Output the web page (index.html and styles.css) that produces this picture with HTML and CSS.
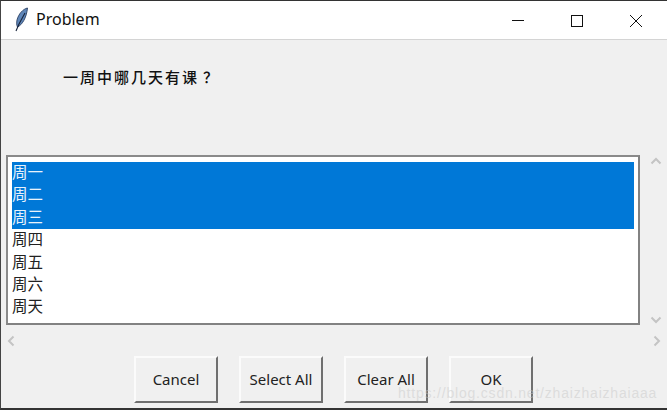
FILE: index.html
```html
<!DOCTYPE html>
<html lang="zh-CN">

<head>
    <meta charset="UTF-8">
    <meta name="viewport" content="width=device-width, initial-scale=1.0">
    <title>Problem</title>
    <link rel="stylesheet" href="styles.css">
</head>

<body>
    <div class="window">
        <div class="titlebar">
            <svg class="app-icon" width="16" height="26" viewBox="0 0 16 26">
                <path d="M13.500 1C9 2 4.500 7 3 13C2.500 16 2.500 18 3.500 20C8 18 12.500 11 13.500 1Z" fill="#5f86b8" stroke="#2a3f63" stroke-width="0.900"/>
                <path d="M11 6L5 17L2 24" fill="none" stroke="#16233a" stroke-width="1.100"/>
            </svg>
            <span class="title">Problem</span>
            <div class="window-controls">
                <svg class="ctl" width="46" height="38" viewBox="0 0 46 38"><path d="M17 19.500H29" stroke="#111" stroke-width="1"/></svg>
                <svg class="ctl" width="46" height="38" viewBox="0 0 46 38"><rect x="17.500" y="14.500" width="11" height="11" fill="none" stroke="#111" stroke-width="1"/></svg>
                <svg class="ctl" width="46" height="38" viewBox="0 0 46 38"><path d="M17 14L29 26M29 14L17 26" stroke="#111" stroke-width="1"/></svg>
            </div>
        </div>

        <div class="content">
            <div class="question">一周中哪几天有课<span class="qmark">？</span></div>

            <div class="list-area">
                <ul class="listbox">
                    <li class="selected">周一</li>
                    <li class="selected">周二</li>
                    <li class="selected">周三</li>
                    <li>周四</li>
                    <li>周五</li>
                    <li>周六</li>
                    <li>周天</li>
                </ul>
                <div class="vscroll">
                    <svg width="12" height="8" viewBox="0 0 12 8"><path d="M1.500 6.500L6 2L10.500 6.500" class="chevron"/></svg>
                    <svg width="12" height="8" viewBox="0 0 12 8"><path d="M1.500 1.500L6 6L10.500 1.500" class="chevron"/></svg>
                </div>
                <div class="hscroll">
                    <svg width="8" height="12" viewBox="0 0 8 12"><path d="M6.500 1.500L2 6L6.500 10.500" class="chevron"/></svg>
                    <svg width="8" height="12" viewBox="0 0 8 12"><path d="M1.500 1.500L6 6L1.500 10.500" class="chevron"/></svg>
                </div>
            </div>

            <div class="buttons">
                <button class="btn">Cancel</button>
                <button class="btn">Select All</button>
                <button class="btn">Clear All</button>
                <button class="btn">OK</button>
            </div>
        </div>

        <div class="watermark">https://blog.csdn.net/zhaizhaizhaiaaa</div>
    </div>
</body>

</html>
```

FILE: styles.css
```css
* {
    box-sizing: border-box;
}

html,
body {
    margin: 0;
    padding: 0;
}

body {
    width: 667px;
    height: 410px;
    overflow: hidden;
    background-color: #f0f0f0;
    font-family: "Noto Sans", "Liberation Sans", "Noto Sans CJK SC", sans-serif;
}

.window {
    position: relative;
    width: 667px;
    height: 410px;
    background-color: #f0f0f0;
    border-top: 1px solid #333;
    border-left: 1px solid #444;
    border-bottom: 2px solid #333;
    display: flex;
    flex-direction: column;
}

.titlebar {
    height: 39px;
    flex: none;
    background-color: white;
    border-bottom: 1px solid #d4d4d4;
    display: flex;
    align-items: center;
    padding-left: 13px;
}

.app-icon {
    flex: none;
}

.title {
    margin-left: 6px;
    margin-bottom: 2px;
    font-size: 16px;
    color: #111;
}

.window-controls {
    margin-left: auto;
    margin-right: 8px;
    display: flex;
    gap: 13px;
}

.ctl {
    display: block;
}

.content {
    flex: 1;
    display: flex;
    flex-direction: column;
    padding-left: 5px;
}

.question {
    height: 115px;
    padding-top: 27px;
    padding-left: 57px;
    font-family: "Noto Sans CJK SC", sans-serif;
    font-size: 15px;
    line-height: 20px;
    letter-spacing: 2px;
    font-weight: 500;
    color: #111;
}

.qmark {
    margin-left: 4px;
}

.list-area {
    display: grid;
    grid-template-columns: 634px 1fr;
    grid-template-rows: 170px 31px;
}

.listbox {
    margin: 0;
    padding: 5px 4px 0 4px;
    list-style: none;
    background-color: white;
    border: 2px solid;
    border-color: #8a8a8a #828282 #828282 #8a8a8a;
    overflow: hidden;
}

.listbox li {
    height: 22.400px;
    line-height: 18px;
    font-family: "Noto Sans CJK SC", sans-serif;
    font-size: 15.500px;
    color: #222;
}

.listbox li.selected {
    background-color: #0078d7;
    color: #e8f2fb;
}

.vscroll {
    display: flex;
    flex-direction: column;
    justify-content: space-between;
    align-items: center;
    padding: 2px 0 1px;
    margin-left: 7px;
    width: 18px;
}

.hscroll {
    grid-column: 1 / 3;
    display: flex;
    justify-content: space-between;
    align-items: center;
    padding: 0 6px 0 1px;
}

.chevron {
    fill: none;
    stroke: #c4c4c4;
    stroke-width: 2;
}

.buttons {
    display: flex;
    gap: 21px;
    padding-left: 128px;
}

.btn {
    width: 84px;
    height: 47px;
    background-color: #f0f0f0;
    border: 2px solid;
    border-color: #fbfbfb #6f6f6f #6f6f6f #fbfbfb;
    font-family: "Noto Sans", "Liberation Sans", sans-serif;
    font-size: 15px;
    color: #222;
    padding: 0 0 2px;
}

.watermark {
    position: absolute;
    left: 397px;
    top: 384px;
    font-family: "Liberation Sans", sans-serif;
    font-size: 14px;
    letter-spacing: 0.800px;
    color: rgba(200, 200, 200, 0.500);
    white-space: nowrap;
}
```
